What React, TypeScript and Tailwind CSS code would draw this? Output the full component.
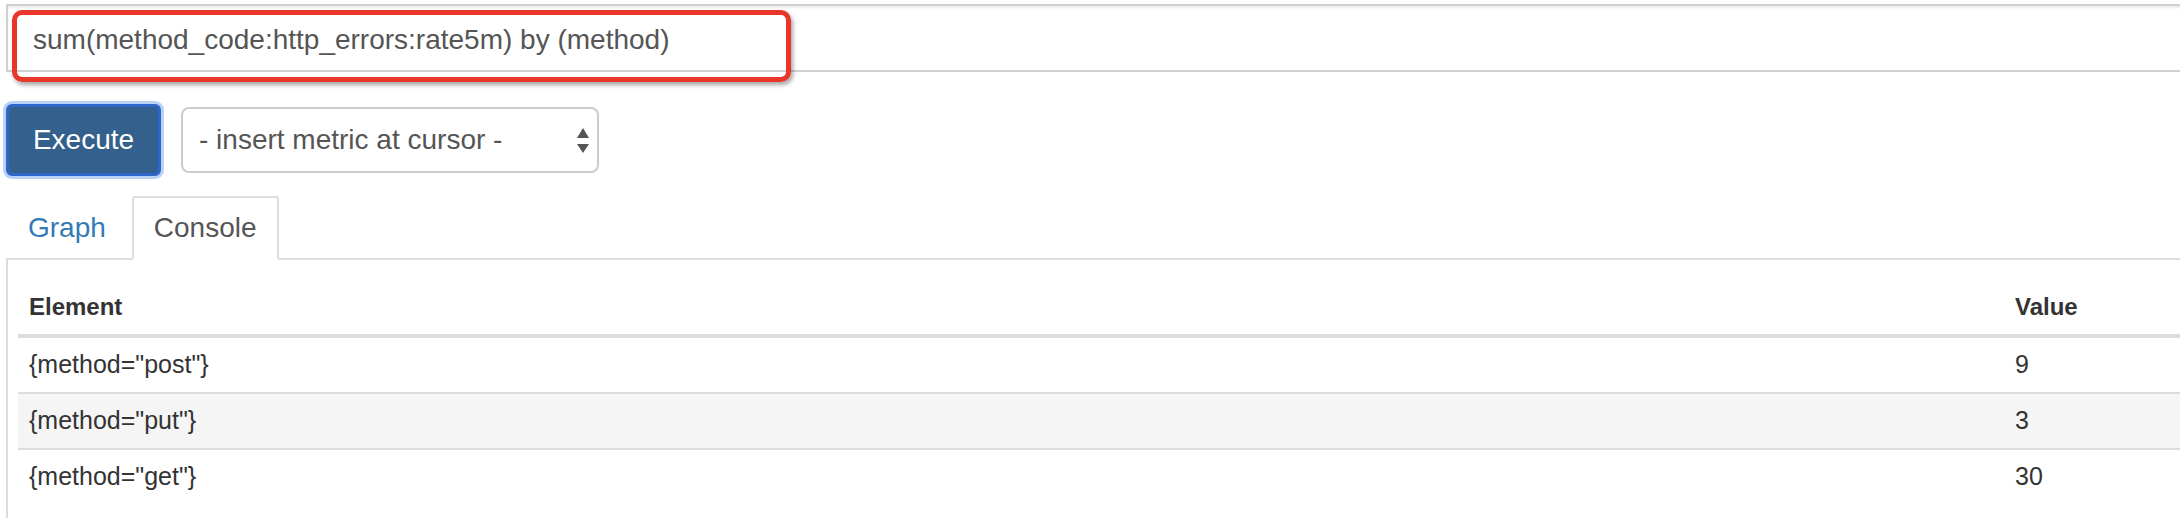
const results = [
  { element: '{method="post"}', value: '9' },
  { element: '{method="put"}', value: '3' },
  { element: '{method="get"}', value: '30' },
];

const App = () => {
  return (
    <div className="w-[2180px] h-[518px] overflow-hidden bg-white font-['Liberation_Sans',Arial,sans-serif]">
      <div className="w-[2400px] pl-[6px] pt-[4px]">
        {/* Expression input with highlight annotation */}
        <div className="relative">
          <textarea
            readOnly
            rows={1}
            defaultValue="sum(method_code:http_errors:rate5m) by (method)"
            className="block w-full h-[68px] resize-none overflow-hidden border-2 border-[#d0d0d0] bg-white pl-[25px] pr-[24px] pt-[14px] pb-[10px] text-[28px] leading-[40px] text-[#555] shadow-[inset_0_2px_2px_rgba(0,0,0,0.075)] outline-none font-['Liberation_Sans',Arial,sans-serif]"
          />
          <div className="absolute left-[6px] top-[6px] w-[779px] h-[72px] border-[5px] border-[#e8362a] rounded-[10px] shadow-[2px_3px_4px_rgba(0,0,0,0.35)] pointer-events-none" />
        </div>

        {/* Controls */}
        <div className="flex items-center gap-[20px] mt-[32px]">
          <button className="h-[72px] w-[155px] bg-[#33608c] border-[3px] border-[#2f66c9] rounded-[6px] shadow-[0_0_0_3px_rgba(120,165,240,0.5)] text-white text-[28px] leading-none">
            Execute
          </button>
          <div className="w-[418px] h-[66px] border-2 border-[#cccccc] rounded-[8px] bg-white flex items-center justify-between pl-[16px] pr-[8px]">
            <span className="text-[28px] text-[#555]">- insert metric at cursor -</span>
            <svg width="12" height="26" viewBox="0 0 12 26" className="mt-[1px]">
              <polygon points="6,0 12,10 0,10" fill="#555" />
              <polygon points="0,16 12,16 6,25" fill="#555" />
            </svg>
          </div>
        </div>

        {/* Tabs */}
        <div className="mt-[20px] flex items-end h-[64px] border-b-2 border-[#ddd]">
          <div className="h-[64px] -mb-[2px] mr-[4px] px-[22px] flex items-center text-[28px] text-[#337ab7]">
            Graph
          </div>
          <div className="h-[64px] -mb-[2px] px-[20px] flex items-center border-2 border-[#ddd] border-b-transparent rounded-t-[3px] bg-white text-[28px] text-[#555]">
            Console
          </div>
        </div>

        {/* Console panel */}
        <div className="border-l-2 border-[#ddd] pl-[10px] pt-[20px] h-[260px]">
          <div className="flex h-[58px] items-center border-b-4 border-[#ddd] text-[24px] font-bold text-[#333]">
            <div className="w-[1986px] pl-[11px]">Element</div>
            <div className="pl-[11px]">Value</div>
          </div>
          {results.map((r, i) => (
            <div
              key={r.element}
              className={`flex items-center text-[25px] text-[#333] ${i === 0 ? 'h-[54px]' : 'h-[56px] border-t-2 border-[#ddd]'} ${i === 1 ? 'bg-[#f5f5f5]' : ''}`}
            >
              <div className="w-[1986px] pl-[11px]">{r.element}</div>
              <div className="pl-[11px]">{r.value}</div>
            </div>
          ))}
        </div>
      </div>
    </div>
  );
};

export default App;
